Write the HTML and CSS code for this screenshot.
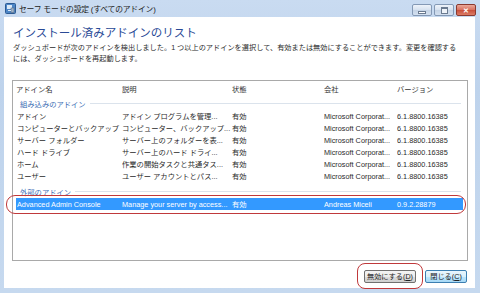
FILE: index.html
```html
<!DOCTYPE html>
<html lang="ja">

<head>
    <meta charset="UTF-8">
    <title>セーフ モードの設定 (すべてのアドイン)</title>
    <link rel="stylesheet" href="styles.css">
</head>

<body>
    <div class="window">
        <div class="titlebar">
            <svg class="app-icon" width="11" height="11" viewBox="0 0 11 11">
                <rect x="0.5" y="0.5" width="10" height="10" rx="1" fill="#4d86c6" stroke="#2c5a93" />
                <rect x="2" y="2" width="5" height="4" fill="#dbeaf8" />
                <rect x="6" y="5" width="3" height="4.5" fill="#9fb3c8" stroke="#5c6f86" stroke-width="0.6" />
                <rect x="3" y="7" width="3" height="1" fill="#dbeaf8" />
            </svg>
            <span class="title">セーフ モードの設定 (すべてのアドイン)</span>
            <div class="win-buttons">
                <div class="win-btn min"><span class="glyph-min"></span></div>
                <div class="win-btn max"><span class="glyph-max"></span></div>
                <div class="win-btn close">✕</div>
            </div>
        </div>

        <div class="client">
            <h1 class="heading">インストール済みアドインのリスト</h1>
            <p class="desc">ダッシュボードが次のアドインを検出しました。1 つ以上のアドインを選択して、有効または無効にすることができます。変更を確認する<br>には、ダッシュボードを再起動します。</p>

            <div class="listbox">
                <div class="list-header">
                    <span>アドイン名</span>
                    <span>説明</span>
                    <span>状態</span>
                    <span>会社</span>
                    <span>バージョン</span>
                </div>

                <div class="group first">組み込みのアドイン</div>
                <div class="row">
                    <span>アドイン</span>
                    <span>アドイン プログラムを管理...</span>
                    <span>有効</span>
                    <span>Microsoft Corporat...</span>
                    <span>6.1.8800.16385</span>
                </div>
                <div class="row">
                    <span>コンピューターとバックアップ</span>
                    <span>コンピューター、バックアップ...</span>
                    <span>有効</span>
                    <span>Microsoft Corporat...</span>
                    <span>6.1.8800.16385</span>
                </div>
                <div class="row">
                    <span>サーバー フォルダー</span>
                    <span>サーバー上のフォルダーを表...</span>
                    <span>有効</span>
                    <span>Microsoft Corporat...</span>
                    <span>6.1.8800.16385</span>
                </div>
                <div class="row">
                    <span>ハード ドライブ</span>
                    <span>サーバー上のハード ドライ...</span>
                    <span>有効</span>
                    <span>Microsoft Corporat...</span>
                    <span>6.1.8800.16385</span>
                </div>
                <div class="row">
                    <span>ホーム</span>
                    <span>作業の開始タスクと共通タス...</span>
                    <span>有効</span>
                    <span>Microsoft Corporat...</span>
                    <span>6.1.8800.16385</span>
                </div>
                <div class="row">
                    <span>ユーザー</span>
                    <span>ユーザー アカウントとパス...</span>
                    <span>有効</span>
                    <span>Microsoft Corporat...</span>
                    <span>6.1.8800.16385</span>
                </div>

                <div class="group">外部のアドイン</div>
                <div class="row selected">
                    <span>Advanced Admin Console</span>
                    <span>Manage your server by access...</span>
                    <span>有効</span>
                    <span>Andreas Miceli</span>
                    <span>0.9.2.28879</span>
                </div>
            </div>

            <div class="buttons">
                <button class="btn">無効にする(<u>D</u>)</button>
                <button class="btn default">閉じる(<u>C</u>)</button>
            </div>
        </div>

        <!-- red callouts drawn over the screenshot -->
        <div class="callout callout-row"></div>
        <div class="callout callout-btn"></div>
    </div>
</body>

</html>
```

FILE: styles.css
```css
html,
body {
    margin: 0;
    padding: 0;
}

body {
    font-family: "Liberation Sans", "Noto Sans CJK JP", sans-serif;
    width: 480px;
    height: 293px;
    overflow: hidden;
}

.window {
    position: relative;
    width: 480px;
    height: 293px;
    box-sizing: border-box;
    padding: 0 5px 5px 4px;
    background: linear-gradient(#c9dbf1, #bed3ec 30%, #c6d9ef);
    display: flex;
    flex-direction: column;
}

.titlebar {
    height: 17px;
    display: flex;
    align-items: center;
}

.app-icon {
    margin-left: 1px;
    margin-right: 3px;
}

.title {
    font-size: 7.8px;
    color: #1b1b1b;
    letter-spacing: -0.2px;
}

.win-buttons {
    margin-left: auto;
    margin-right: -1px;
    display: flex;
    gap: 2px;
    align-self: flex-start;
    margin-top: 4px;
}

.win-btn {
    height: 10px;
    border: 1px solid #8499b5;
    border-radius: 2px;
    background: linear-gradient(#eef3fa, #d6e1ef 50%, #c4d3e6 51%, #d3e0f0);
    display: flex;
    align-items: center;
    justify-content: center;
    box-sizing: content-box;
}

.win-btn.min,
.win-btn.max {
    width: 18px;
}

.win-btn.close {
    width: 18px;
    border-color: #8a3a30;
    background: linear-gradient(#eaa89a, #d8705e 50%, #c84e3a 51%, #dc7c66);
    color: #fff;
    font-size: 7px;
    font-weight: bold;
    line-height: 1;
}

.glyph-min {
    width: 6px;
    height: 1px;
    background: #fff;
    border: 1px solid #6a7a90;
    margin-top: 4px;
}

.glyph-max {
    width: 5px;
    height: 4px;
    border: 1px solid #6a7a90;
    border-top-width: 2px;
    background: #eef3f9;
}

.client {
    flex: 1;
    background: #fff;
    display: flex;
    flex-direction: column;
    padding: 8px 7px 5px 8px;
    min-height: 0;
}

.heading {
    margin: 0 0 0 1px;
    font-size: 11.5px;
    line-height: 16px;
    font-weight: normal;
    color: #2a4a96;
}

.desc {
    margin: 1px 0 0 1px;
    font-size: 7.2px;
    line-height: 11px;
    color: #2b2b2b;
    white-space: nowrap;
}

.listbox {
    margin-top: 16px;
    height: 181px;
    box-sizing: border-box;
    border: 1px solid #a9a9a9;
    padding: 0 4px 0 3px;
    font-size: 7.3px;
    color: #2a2a2a;
}

.list-header,
.row {
    display: grid;
    grid-template-columns: 105px 110px 92px 73px 1fr;
    padding-left: 1px;
    align-items: center;
    white-space: nowrap;
}

.list-header span,
.row span {
    overflow: hidden;
}

.list-header {
    height: 16px;
    color: #333;
}

.list-header span:first-child {
    margin-left: -1px;
}

.group {
    height: 13px;
    display: flex;
    align-items: center;
    padding-left: 4px;
    color: #3a6cb4;
    margin-top: 3px;
}

.group.first {
    margin-top: 0;
}

.group::after {
    content: "";
    flex: 1;
    height: 1px;
    background: #dbe3ec;
    margin: 0 2px 0 4px;
}

.row {
    height: 12px;
}

.row.selected {
    background: #3399ff;
    color: #fff;
}

.buttons {
    margin-top: 9px;
    display: flex;
    justify-content: flex-end;
    gap: 9px;
    padding-right: 1px;
}

.btn {
    height: 13px;
    padding: 0;
    border: 1px solid #707070;
    border-radius: 2px;
    background: linear-gradient(#f4f4f4, #ebebeb 50%, #dddddd 51%, #cfcfcf);
    font-family: inherit;
    font-size: 7.2px;
    color: #222;
    line-height: 11px;
    width: 52px;
}

.btn.default {
    width: 42px;
    border-color: #3c7fb1;
    background: linear-gradient(#eaf6fd, #d9f0fc 50%, #bee6fd 51%, #a7d9f5);
}

.btn u {
    text-decoration: underline;
}

.callout {
    position: absolute;
    border: 1.5px solid #c0393b;
    box-sizing: border-box;
}

.callout-row {
    left: 6px;
    top: 195px;
    width: 460px;
    height: 19px;
    border-radius: 9px;
}

.callout-btn {
    left: 357px;
    top: 263px;
    width: 66px;
    height: 26px;
    border-radius: 8px;
}
```
